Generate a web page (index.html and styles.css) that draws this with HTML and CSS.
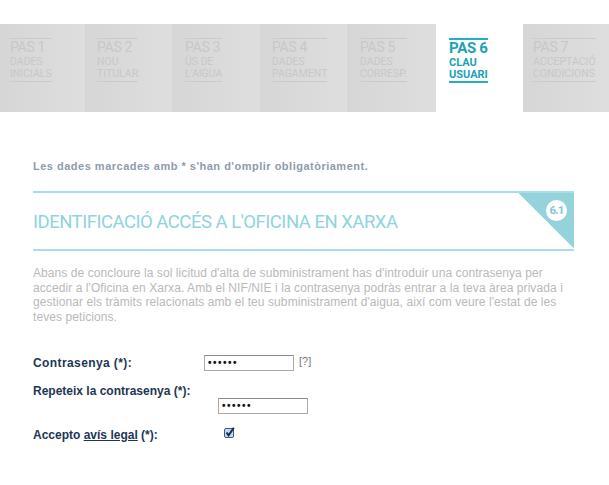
FILE: index.html
```html
<!DOCTYPE html>
<html lang="ca">
<head>
<meta charset="utf-8">
<title>Pas 6 - Clau usuari</title>
<link rel="stylesheet" href="styles.css">
</head>
<body>
<nav class="steps">
  <div class="step w85"><div class="step-in"><span class="num">PAS 1</span><span class="lbl">DADES</span><span class="lbl">INICIALS</span></div></div>
  <div class="step w87"><div class="step-in"><span class="num">PAS 2</span><span class="lbl">NOU</span><span class="lbl">TITULAR</span></div></div>
  <div class="step w88"><div class="step-in"><span class="num">PAS 3</span><span class="lbl">ÚS DE</span><span class="lbl">L'AIGUA</span></div></div>
  <div class="step w87"><div class="step-in"><span class="num">PAS 4</span><span class="lbl">DADES</span><span class="lbl">PAGAMENT</span></div></div>
  <div class="step w89"><div class="step-in"><span class="num">PAS 5</span><span class="lbl">DADES</span><span class="lbl">CORRESP.</span></div></div>
  <div class="step w87 active"><div class="step-in"><span class="num">PAS 6</span><span class="lbl">CLAU</span><span class="lbl">USUARI</span></div></div>
  <div class="step w86"><div class="step-in"><span class="num">PAS 7</span><span class="lbl">ACCEPTACIÓ</span><span class="lbl">CONDICIONS</span></div></div>
</nav>

<main class="content">
  <p class="notice">Les dades marcades amb * s'han d'omplir obligatòriament.</p>

  <section class="section-head">
    <h1>IDENTIFICACIÓ ACCÉS A L'OFICINA EN XARXA</h1>
    <div class="corner"><span class="badge">6.1</span></div>
  </section>

  <p class="intro">Abans de concloure la sol licitud d'alta de subministrament has d'introduir una contrasenya per<br>accedir a l'Oficina en Xarxa. Amb el NIF/NIE i la contrasenya podràs entrar a la teva àrea privada i<br>gestionar els tràmits relacionats amb el teu subministrament d'aigua, així com veure l'estat de les<br>teves peticions.</p>

  <form class="form">
    <div class="row row1">
      <label class="lab">Contrasenya (*):</label>
      <span class="pw">••••••</span>
      <span class="help">[?]</span>
    </div>
    <div class="row row2">
      <label class="lab">Repeteix la contrasenya (*):</label>
    </div>
    <div class="row row2b">
      <span class="pw">••••••</span>
    </div>
    <div class="row row3">
      <label class="lab">Accepto <a href="#" class="link">avís legal</a> (*):</label>
      <span class="check"><svg width="11" height="11" viewBox="0 0 11 11"><rect x="0.5" y="1.5" width="9" height="9" rx="1.5" fill="#c9d7ea" stroke="#3c5a8a"/><path d="M2.5 5.5 L4.6 8.3 L9.8 0.8" fill="none" stroke="#13294d" stroke-width="2"/></svg></span>
    </div>
  </form>
</main>
</body>
</html>
```
FILE: styles.css
```css
* { box-sizing: border-box; }
html, body { margin: 0; padding: 0; background: #fff; }
body { font-family: "Liberation Sans", Arial, sans-serif; width: 609px; height: 485px; overflow: hidden; }

.steps { display: flex; margin-top: 24px; height: 88px; }
.step { height: 88px; padding: 14px 0 0 10px; background: linear-gradient(to right, #d6d6d6, #dedede); }
.w85 { width: 85px; }
.w86 { width: 86px; }
.w87 { width: 87px; padding-left: 12px; }
.w88 { width: 88px; padding-left: 13px; }
.w89 { width: 89px; padding-left: 13px; }
.step-in { display: inline-flex; flex-direction: column; border-top: 1px solid #cbcbcb; border-bottom: 1px solid #cbcbcb; font-family: Roboto, "Liberation Sans", sans-serif; color: #c8c8c8; padding-bottom: 1px; }
.num { font-size: 14px; line-height: 17px; letter-spacing: -0.3px; }
.lbl { font-size: 10.5px; line-height: 12px; letter-spacing: 0; }
.step.active { background: #fff; padding-left: 13px; }
.step.active .step-in { color: #1aa3b5; border-top: 2px solid #28aebe; border-bottom: 2px solid #28aebe; font-weight: 700; padding-bottom: 0; }
.step.active .num { font-size: 15px; line-height: 17px; }
.step.active .lbl { font-size: 11px; line-height: 12px; }

.content { padding: 0 35px 0 33px; }
.notice { margin: 48px 0 0; font-size: 11px; line-height: 13px; font-weight: 700; color: #8e9bab; letter-spacing: 0.5px; }

.section-head { margin-top: 18px; height: 60px; border-top: 2px solid #a8dfe5; border-bottom: 2px solid #a8dfe5; display: flex; justify-content: space-between; align-items: flex-start; }
.section-head h1 { margin: 19px 0 0; font-family: Roboto, "Liberation Sans", sans-serif; font-weight: 400; font-size: 18.5px; line-height: 20px; letter-spacing: -0.5px; color: #8fd4dc; }
.corner { position: relative; width: 56px; height: 56px; background: linear-gradient(to top right, transparent 50%, #94d3db 50%); }
.badge { position: absolute; left: 28px; top: 7px; width: 21px; height: 21px; border-radius: 50%; background: #fff; color: #7cc9d3; font-family: Roboto, sans-serif; font-weight: 700; font-size: 11.5px; line-height: 21px; text-align: center; letter-spacing: -0.8px; }

.intro { margin: 15px 0 0; font-size: 12px; line-height: 14.5px; color: #b9b9b9; white-space: nowrap; letter-spacing: 0.08px; }

.form { margin-top: 31px; }
.row { display: flex; align-items: center; }
.lab { font-size: 12px; font-weight: 700; color: #1d3656; }
.row1 { height: 16px; }
.row1 .lab { width: 171px; letter-spacing: 0.4px; }
.pw { display: inline-block; width: 90px; height: 16px; border: 1px solid #a9a9a9; border-top-color: #8a8a8a; font-size: 10px; line-height: 14px; padding-left: 3px; color: #111; letter-spacing: 1.5px; font-weight: 700; }
.help { margin-left: 5px; font-size: 11px; color: #777; margin-top: -5px; }
.row2 { margin-top: 13px; height: 14px; }
.row2b { margin-top: 0; padding-left: 185px; height: 16px; }
.row3 { margin-top: 14px; height: 14px; }
.row3 .lab { width: 191px; }
.link { color: #1d3656; text-decoration: underline; }
.check { display: inline-block; width: 11px; height: 11px; margin-top: -6px; }
.check svg { display: block; }
```
